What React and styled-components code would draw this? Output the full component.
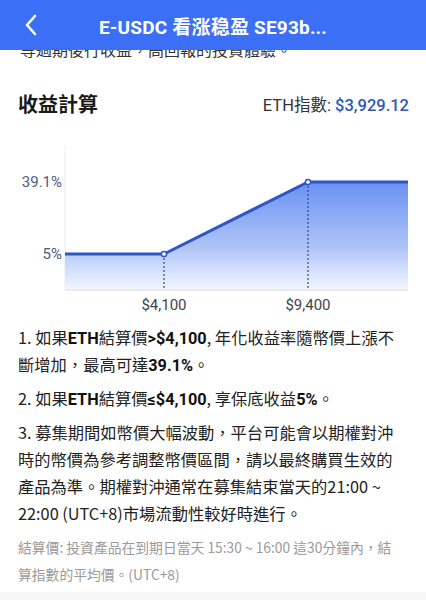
import React from "react";
import styled, { createGlobalStyle } from "styled-components";

const Global = createGlobalStyle`
  html, body { margin: 0; padding: 0; background: #fff; }
  body { font-family: "Noto Sans CJK TC", "Noto Sans", sans-serif; color: #222; }
`;

const Page = styled.div`
  width: 426px;
  height: 600px;
  overflow: hidden;
  display: flex;
  flex-direction: column;
  background: #fff;
`;

const Header = styled.header`
  height: 50px;
  flex: none;
  background: #3b6ff5;
  display: flex;
  align-items: center;
  position: relative;
  z-index: 2;
`;

const BackBtn = styled.div`
  width: 60px;
  height: 50px;
  display: flex;
  align-items: center;
  justify-content: center;
  margin-left: 1px;
`;

const Title = styled.h1`
  margin: 0;
  flex: 1;
  margin-right: 61px;
  text-align: center;
  color: #fff;
  font-size: 19px;
  font-weight: 700;
  font-family: "Roboto", "Noto Sans CJK SC", sans-serif;
  letter-spacing: 0.2px;
`;

const Clipped = styled.div`
  height: 8px;
  overflow: hidden;
  display: flex;
  align-items: flex-end;
  padding-left: 20px;
  flex: none;
`;

const ClippedText = styled.div`
  font-size: 16px;
  line-height: 20px;
  color: #333;
  white-space: nowrap;
  margin-bottom: -1px;
`;

const SectionHead = styled.div`
  display: flex;
  justify-content: space-between;
  align-items: center;
  padding: 31px 17px 0 18px;
`;

const SectionTitle = styled.h2`
  margin: 0;
  font-size: 20px;
  font-weight: 700;
  color: #1a1a1a;
`;

const Index = styled.div`
  font-size: 16.5px;
  color: #333;
  font-family: "Roboto", "Noto Sans CJK TC", sans-serif;
`;

const IndexValue = styled.span`
  color: #2f58b8;
  font-weight: 500;
`;

const ChartWrap = styled.div`
  margin-top: 22px;
  height: 175px;
  flex: none;
`;

const Body = styled.div`
  padding: 9px 29px 0 18px;
  display: flex;
  flex-direction: column;
  gap: 7px;
`;

const Para = styled.p`
  margin: 0;
  font-size: 16.3px;
  line-height: 27px;
  color: #222;
`;

const B = styled.b`
  font-family: "Roboto", "Noto Sans CJK TC", sans-serif;
  font-weight: 700;
  color: #111;
  line-height: 1;
`;

const Note = styled.p`
  margin: 0;
  font-size: 13.8px;
  line-height: 27px;
  color: #9a9a9a;
`;

const BottomStrip = styled.div`
  margin-top: auto;
  height: 8px;
  background: #f6f6f6;
  flex: none;
`;

function Chart() {
  const top = 5;
  const base = 150;
  const yHigh = 42;
  const yLow = 114;
  const x0 = 65;
  const x1 = 164;
  const x2 = 308;
  const x3 = 408;
  return (
    <svg width="426" height="175" viewBox="0 0 426 175">
      <defs>
        <linearGradient id="fillg" x1="0" y1="0" x2="0" y2="1">
          <stop offset="0" stopColor="#6a90f2" />
          <stop offset="0.6" stopColor="#aec4f8" />
          <stop offset="1" stopColor="#f3f6fe" />
        </linearGradient>
      </defs>
      <line x1={x0} y1={top} x2={x0} y2={base} stroke="#ececec" strokeWidth="1" />
      <path
        d={`M${x0} ${yLow} L${x1} ${yLow} L${x2} ${yHigh} L${x3} ${yHigh} L${x3} ${base} L${x0} ${base} Z`}
        fill="url(#fillg)"
      />
      <line x1={x0} y1={base} x2={x3} y2={base} stroke="#e6e6e6" strokeWidth="1.5" />
      <line x1={x1} y1={yLow} x2={x1} y2={base} stroke="#2a4a9a" strokeWidth="1.2" strokeDasharray="2 2" />
      <line x1={x2} y1={yHigh} x2={x2} y2={base} stroke="#2a4a9a" strokeWidth="1.2" strokeDasharray="2 2" />
      <polyline
        points={`${x0},${yLow} ${x1},${yLow} ${x2},${yHigh} ${x3},${yHigh}`}
        fill="none"
        stroke="#2d56c6"
        strokeWidth="3"
        strokeLinejoin="round"
      />
      <circle cx={x1} cy={yLow} r="2.6" fill="#fff" stroke="#2d56c6" strokeWidth="1.5" />
      <circle cx={x2} cy={yHigh} r="2.6" fill="#fff" stroke="#2d56c6" strokeWidth="1.5" />
      <g fontFamily="Roboto, sans-serif" fontSize="15" fill="#4a5b86">
        <text x="62" y={yHigh + 5} textAnchor="end">39.1%</text>
        <text x="62" y={yLow + 5} textAnchor="end">5%</text>
      </g>
      <g fontFamily="Roboto, sans-serif" fontSize="15" fill="#444">
        <text x={x1} y="170" textAnchor="middle">$4,100</text>
        <text x={x2} y="170" textAnchor="middle">$9,400</text>
      </g>
    </svg>
  );
}

export default function App() {
  return (
    <>
      <Global />
      <Page>
        <Header>
          <BackBtn>
            <svg width="14" height="22" viewBox="0 0 14 22">
              <path d="M11 2 L3 11 L11 20" fill="none" stroke="#fff" strokeWidth="2.6" strokeLinecap="round" strokeLinejoin="round" />
            </svg>
          </BackBtn>
          <Title>E-USDC 看涨稳盈 SE93b...</Title>
        </Header>
        <Clipped>
          <ClippedText>等過期後行收益，高回報的投資體驗。</ClippedText>
        </Clipped>
        <SectionHead>
          <SectionTitle>收益計算</SectionTitle>
          <Index>
            ETH指數: <IndexValue>$3,929.12</IndexValue>
          </Index>
        </SectionHead>
        <ChartWrap>
          <Chart />
        </ChartWrap>
        <Body>
          <Para>
            1. 如果<B>ETH</B>結算價<B>&gt;$4,100</B>, 年化收益率隨幣價上漲不斷增加，最高可達<B>39.1%</B>。
          </Para>
          <Para>
            2. 如果<B>ETH</B>結算價<B>≤$4,100</B>, 享保底收益<B>5%</B>。
          </Para>
          <Para>
            3. 募集期間如幣價大幅波動，平台可能會以期權對沖時的幣價為參考調整幣價區間，請以最終購買生效的產品為準。期權對沖通常在募集結束當天的21:00 ~ 22:00 (UTC+8)市場流動性較好時進行。
          </Para>
          <Note>
            結算價: 投資產品在到期日當天 15:30 ~ 16:00 這30分鐘內，結算指數的平均價。(UTC+8)
          </Note>
        </Body>
        <BottomStrip />
      </Page>
    </>
  );
}
